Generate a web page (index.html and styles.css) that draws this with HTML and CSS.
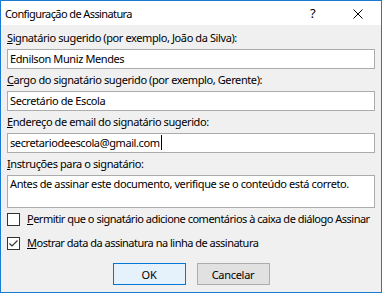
FILE: index.html
```html
<!DOCTYPE html>
<html lang="pt">
<head>
    <meta charset="UTF-8">
    <title>Configuração de Assinatura</title>
    <link rel="stylesheet" href="styles.css">
</head>
<body>
    <div class="dialog">
        <div class="title-bar">
            <span class="title">Configuração de Assinatura</span>
            <span class="help">?</span>
            <svg class="close" width="10" height="10" viewBox="0 0 10 10">
                <path d="M0.5 0.5 L9.5 9.5 M9.5 0.5 L0.5 9.5" stroke="#000" stroke-width="1" fill="none"/>
            </svg>
        </div>

        <div class="content">
            <div class="label"><u>S</u>ignatário sugerido (por exemplo, João da Silva):</div>
            <div class="field">Ednilson Muniz Mendes</div>

            <div class="label"><u>C</u>argo do signatário sugerido (por exemplo, Gerente):</div>
            <div class="field">Secretário de Escola</div>

            <div class="label"><u>E</u>ndereço de email do signatário sugerido:</div>
            <div class="field">secretariodeescola@gmail.com<span class="caret"></span></div>

            <div class="label"><u>I</u>nstruções para o signatário:</div>
            <div class="field area">Antes de assinar este documento, verifique se o conteúdo está correto.</div>

            <div class="check-row first">
                <span class="box"></span>
                <span><u>P</u>ermitir que o signatário adicione comentários à caixa de diálogo Assinar</span>
            </div>
            <div class="check-row">
                <span class="box">
                    <svg width="11" height="11" viewBox="0 0 11 11">
                        <path d="M1.5 5.5 L4 8 L9.5 2.5" stroke="#333" stroke-width="1.2" fill="none"/>
                    </svg>
                </span>
                <span><u>M</u>ostrar data da assinatura na linha de assinatura</span>
            </div>

            <div class="buttons">
                <button class="btn btn-default">OK</button>
                <button class="btn">Cancelar</button>
            </div>
        </div>
    </div>
</body>
</html>
```

FILE: styles.css
```css
body {
    margin: 0;
    font-family: "Noto Sans", Arial, sans-serif;
    font-size: 11px;
    line-height: 16px;
    letter-spacing: -0.4px;
    color: #000;
}

.dialog {
    width: 382px;
    height: 293px;
    box-sizing: border-box;
    border: 1px solid #1a7ad4;
    background-color: #f0f0f0;
    overflow: hidden;
}

.title-bar {
    height: 24px;
    background-color: #fff;
    display: flex;
    align-items: center;
    position: relative;
    font-size: 11px;
}

.title {
    padding-left: 4px;
    padding-top: 1px;
    letter-spacing: -0.6px;
}

.help {
    position: absolute;
    left: 309px;
    top: 4px;
    font-size: 13px;
}

.close {
    position: absolute;
    left: 352px;
    top: 8px;
}

.content {
    padding: 5px 6px 0 6px;
}

.label {
    height: 16px;
    margin-bottom: 3px;
    white-space: nowrap;
}

.field {
    height: 20px;
    box-sizing: border-box;
    border: 1px solid #acacac;
    background-color: #fff;
    padding: 1px 2px;
    margin-bottom: 3px;
    white-space: nowrap;
}

.field.area {
    height: 33px;
    padding-top: 0;
}

.caret {
    display: inline-block;
    width: 1px;
    height: 15px;
    background-color: #000;
    vertical-align: -3px;
    margin-left: 1px;
}

.check-row {
    display: flex;
    align-items: center;
    gap: 7px;
    height: 16px;
    margin-top: 8px;
    white-space: nowrap;
    letter-spacing: -0.5px;
}

.check-row.first {
    margin-top: 3px;
}

.box {
    width: 13px;
    height: 13px;
    box-sizing: border-box;
    border: 1px solid #333;
    background-color: #fff;
    display: flex;
    align-items: center;
    justify-content: center;
    flex-shrink: 0;
}

.buttons {
    display: flex;
    justify-content: center;
    gap: 11px;
    margin-top: 12px;
}

.btn {
    width: 73px;
    height: 22px;
    box-sizing: border-box;
    border: 1px solid #adadad;
    background-color: #e1e1e1;
    font-family: inherit;
    font-size: 11px;
    letter-spacing: -0.3px;
    padding: 0;
}

.btn-default {
    border-color: #0078d7;
    background-color: #e5f1fb;
}
```
